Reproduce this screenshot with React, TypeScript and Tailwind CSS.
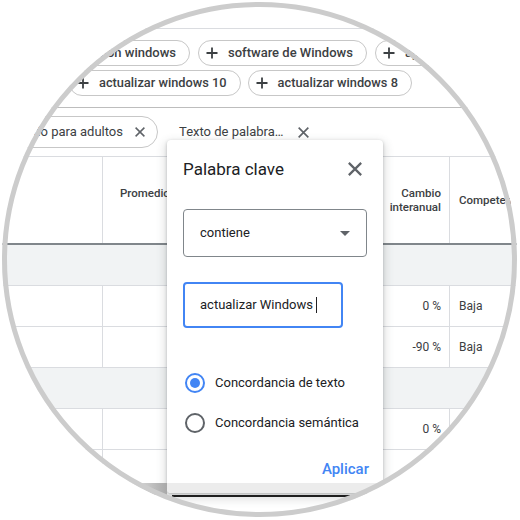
import React from 'react';

// Small stroke icons used across chips and the dialog.
function PlusIcon() {
  return (
    <svg width="14" height="14" viewBox="0 0 14 14" className="shrink-0">
      <path d="M7 1.5v11M1.5 7h11" stroke="#3c4043" strokeWidth="1.8" />
    </svg>
  );
}

function CloseIcon({ size = 10, color = '#5f6368', width = 1.5 }: { size?: number; color?: string; width?: number }) {
  return (
    <svg width={size} height={size} viewBox="0 0 10 10" className="shrink-0">
      <path d="M0.6 0.6l8.8 8.8M9.4 0.6L0.6 9.4" stroke={color} strokeWidth={width} />
    </svg>
  );
}

const chip =
  'h-[26px] shrink-0 flex items-center gap-[9px] pl-[6px] pr-[13px] rounded-full border border-[#c7c7c7] text-[13px] font-medium text-[#3c4043] whitespace-nowrap';

const ROWS = [
  { group: true },
  { change: '0 %', comp: 'Baja' },
  { change: '-90 %', comp: 'Baja' },
  { group: true },
  { change: '0 %', comp: 'Baja' },
  { change: '', comp: '' },
];

export default function App() {
  return (
    <div className="relative w-[520px] h-[520px] overflow-hidden bg-white font-['Roboto',sans-serif]">
      <div className="flex flex-col">
        <div className="h-[29px] border-b border-[#dadce0]" />

        {/* suggested keyword chips */}
        <div className="pt-[11px] pb-[11px] border-b border-[#bdbdbd] flex flex-col gap-[4px] overflow-hidden">
          <div className="flex gap-2 -ml-[10px]">
            <div className={chip + ' w-[200px] justify-end'}>
              <PlusIcon />
              <span>actualización windows</span>
            </div>
            <div className={chip}>
              <PlusIcon />
              <span>software de Windows</span>
            </div>
            <div className={chip}>
              <PlusIcon />
              <span>aplicaciones windows</span>
            </div>
          </div>
          <div className="flex gap-[7px] pl-[69px]">
            <div className={chip + ' gap-[8px]'}>
              <PlusIcon />
              <span className="text-[12.8px]">actualizar windows 10</span>
            </div>
            <div className={chip + ' gap-[8px]'}>
              <PlusIcon />
              <span className="text-[12.8px]">actualizar windows 8</span>
            </div>
          </div>
        </div>

        {/* active filters */}
        <div className="h-[48px] flex items-center overflow-hidden">
          <div className="-ml-[72px] w-[230px] shrink-0 h-[32px] rounded-full border border-[#c7c7c7] flex items-center justify-end gap-[12px] pr-[12px] text-[13px] text-[#3c4043] whitespace-nowrap">
            <span>Excluir contenido para adultos</span>
            <CloseIcon />
          </div>
          <div className="ml-[21px] flex items-center gap-[14px] text-[13px] text-[#3c4043] whitespace-nowrap">
            <span>Texto de palabra…</span>
            <CloseIcon size={11} />
          </div>
        </div>

        {/* table */}
        <div className="border-t border-[#dadce0]">
          <div className="grid grid-cols-[103px_197px_150px_1fr] h-[88px] border-b-2 border-[#80868b] text-[11.5px] font-medium text-[#3c4043] leading-[14px]">
            <div className="border-r border-[#dadce0]" />
            <div className="flex items-center pl-[17px]">
              <div className="w-max text-right whitespace-nowrap">
                Promedio de búsquedas
                <br />
                mensuales
              </div>
            </div>
            <div className="border-r border-[#dadce0] flex items-center justify-end pr-[8px] text-right">
              Cambio
              <br />
              interanual
            </div>
            <div className="flex items-center pl-[9px] whitespace-nowrap">Competencia</div>
          </div>
          {ROWS.map((r, i) =>
            r.group ? (
              <div key={i} className="h-[41px] bg-[#f1f3f4] border-b border-[#dadce0]" />
            ) : (
              <div
                key={i}
                className="grid grid-cols-[103px_197px_150px_1fr] h-[41px] border-b border-[#dadce0] text-[12px] text-[#3c4043]"
              >
                <div className="border-r border-[#dadce0]" />
                <div />
                <div className="border-r border-[#dadce0] flex items-center justify-end pr-[8px]">{r.change}</div>
                <div className="flex items-center pl-[9px]">{r.comp}</div>
              </div>
            )
          )}
        </div>
      </div>

      {/* keyword filter dialog */}
      <div className="absolute left-[167px] top-[140px] w-[216px] h-[353px] bg-white rounded-[4px] overflow-hidden shadow-[0_1px_3px_rgba(60,64,67,0.3),0_4px_8px_3px_rgba(60,64,67,0.15)] flex flex-col">
        <div className="shrink-0 flex items-center justify-between pl-[16px] pr-[21px] pt-[17px]">
          <span className="text-[17px] leading-[24px] text-[#202124]">Palabra clave</span>
          <CloseIcon size={14} width={1.6} />
        </div>
        <div className="shrink-0 mt-[28px] ml-[16px] w-[184px] h-[48px] rounded-[4px] border border-[#80868b] flex items-center justify-between pl-[16px] pr-[16px]">
          <span className="text-[13px] text-[#202124]">contiene</span>
          <svg width="10" height="5" viewBox="0 0 10 5">
            <path d="M0 0h10L5 5z" fill="#5f6368" />
          </svg>
        </div>
        <div className="shrink-0 mt-[25px] ml-[16px] w-[160px] h-[46px] rounded-[4px] border-2 border-[#4285f4] flex items-center pl-[15px]">
          <span className="text-[13px] text-[#202124]">actualizar Windows</span>
          <span className="ml-[3px] w-px h-[16px] bg-[#202124]" />
        </div>
        <div className="shrink-0 mt-[35px] flex flex-col">
          <div className="h-[40px] flex items-center gap-[10px] pl-[18px]">
            <span className="w-[20px] h-[20px] rounded-full border-2 border-[#4285f4] flex items-center justify-center">
              <span className="w-[10px] h-[10px] rounded-full bg-[#4285f4]" />
            </span>
            <span className="text-[13px] text-[#202124]">Concordancia de texto</span>
          </div>
          <div className="h-[40px] flex items-center gap-[10px] pl-[18px]">
            <span className="w-[20px] h-[20px] rounded-full border-2 border-[#5f6368]" />
            <span className="text-[13px] text-[#202124]">Concordancia semántica</span>
          </div>
        </div>
        <div className="shrink-0 mt-[17px] flex justify-end pr-[14px]">
          <span className="text-[15px] leading-[18px] font-medium text-[#4285f4]">Aplicar</span>
        </div>
        <div className="shrink-0 mt-auto h-[10px] bg-[#ececec]" />
      </div>

      {/* bottom edge of the captured window */}
      <div className="absolute left-0 top-[483px] w-[167px] h-[12px] bg-gradient-to-r from-[#ececec] from-[75%] to-[#a8a8a8]" />
      <div className="absolute left-[172px] top-[495px] w-[178px] h-[2px] bg-[#1f1f1f]" />

      {/* magnifier ring */}
      <div className="absolute left-[2px] top-[2px] w-[515px] h-[515px] rounded-full border-[5px] border-[#cccccc] shadow-[0_0_0_300px_#ffffff]" />
    </div>
  );
}
